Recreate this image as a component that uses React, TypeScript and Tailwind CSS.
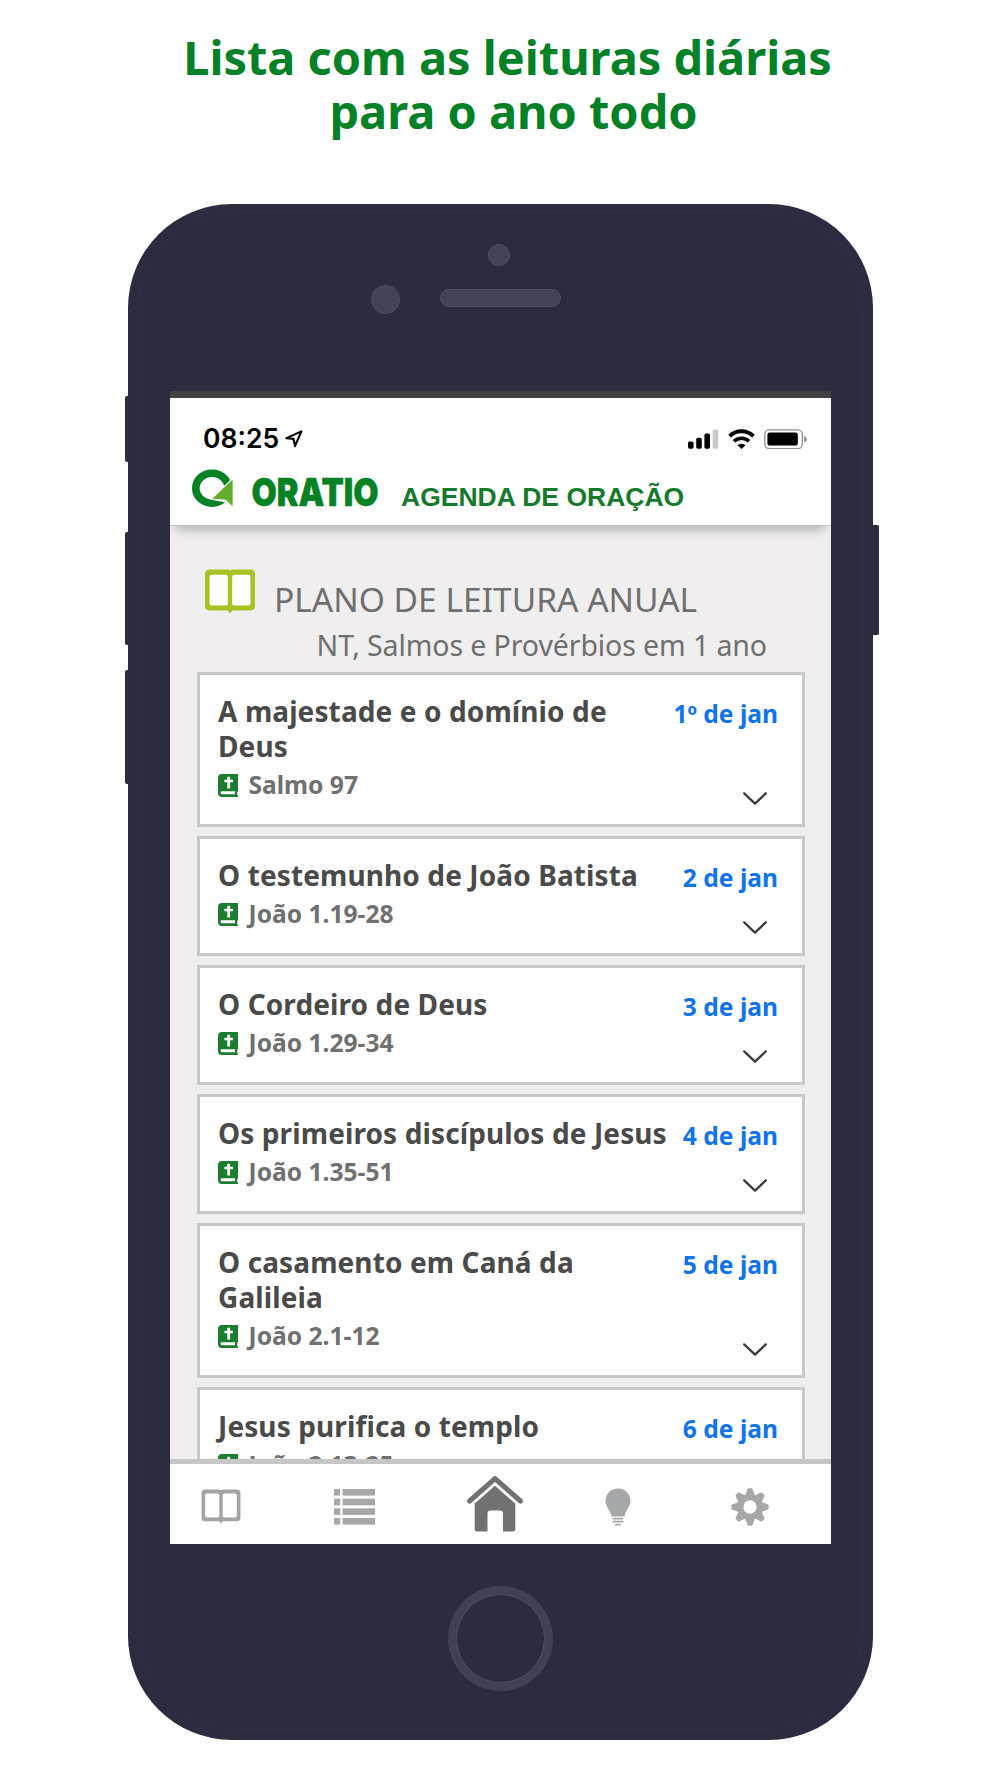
// src/App.tsx
//
// Store preview page: a headline above a phone that shows the yearly reading plan.

import React from 'react';

interface Reading {
  title: string;
  passage: string;
  date: string;
}

const readings: Reading[] = [
  { title: 'A majestade e o domínio de Deus', passage: 'Salmo 97', date: '1º de jan' },
  { title: 'O testemunho de João Batista', passage: 'João 1.19-28', date: '2 de jan' },
  { title: 'O Cordeiro de Deus', passage: 'João 1.29-34', date: '3 de jan' },
  { title: 'Os primeiros discípulos de Jesus', passage: 'João 1.35-51', date: '4 de jan' },
  { title: 'O casamento em Caná da Galileia', passage: 'João 2.1-12', date: '5 de jan' },
  { title: 'Jesus purifica o templo', passage: 'João 2.13-25', date: '6 de jan' },
];

const gearTeeth = [0, 45, 90, 135, 180, 225, 270, 315];

function LocationIcon() {
  return (
    <svg className="h-[18px] w-[18px]" viewBox="0 0 18 18" fill="none">
      <path d="M1.3 8.2 16.4 1.4 10 16.2 8.6 8.9Z" stroke="#000" strokeWidth="2.1" strokeLinejoin="round" />
    </svg>
  );
}

function SignalIcon() {
  return (
    <svg className="h-5 w-[31px]" viewBox="0 0 31 20">
      <rect x="0" y="12.4" width="5.6" height="7.3" rx="1.6" />
      <rect x="8.2" y="8.8" width="5.6" height="10.9" rx="1.6" />
      <rect x="16.4" y="4.6" width="5.6" height="15.1" rx="1.6" />
      <rect x="24.7" y="0.6" width="5.6" height="19.1" rx="1.6" fill="#c9c9c9" />
    </svg>
  );
}

function WifiIcon() {
  return (
    <svg className="h-5 w-[27px]" viewBox="0 0 27 20" fill="none">
      <path d="M1.6 7.2a16.8 16.8 0 0 1 23.8 0" stroke="#000" strokeWidth="3.8" />
      <path d="M6 12.3a10.6 10.6 0 0 1 15 0" stroke="#000" strokeWidth="3.6" />
      <path d="M9.5 16.3a5.7 5.7 0 0 1 8 0l-4 3.6Z" fill="#000" />
    </svg>
  );
}

function BatteryIcon() {
  return (
    <svg className="h-5 w-[43px]" viewBox="0 0 43 20">
      <rect x="0.8" y="0.8" width="37.6" height="18.8" rx="4.6" fill="#fff" stroke="#8e8e8e" strokeWidth="1.3" />
      <rect x="3.4" y="3.6" width="30.4" height="13" rx="2.2" />
      <path d="M40.2 7c3.4 1 3.4 5.4 0 6.4Z" fill="#8e8e8e" />
    </svg>
  );
}

function OratioMark() {
  return (
    <svg className="h-[38px] w-[42px]" viewBox="0 0 42 38">
      <ellipse cx="20" cy="19.2" rx="16.2" ry="15" fill="none" stroke="#068124" strokeWidth="7.6" />
      <path d="M42 7.5 17.5 30.6l22.5 4L42 38Z" fill="#fff" />
      <path d="M40.6 10.4 20.4 29.8l13 .6 7.2 6.8Z" fill="#62ad2b" />
    </svg>
  );
}

function BookIcon({ className, frame }: { className: string; frame: string }) {
  return (
    <svg className={className} viewBox="0 0 50 45">
      <path
        d="M4.5.5H22q2 0 3 1.2Q26 .5 28 .5h17.5Q50 .5 50 5v32q0 4.4-4.5 4.4H27.2L25 44.6l-2.2-3.2H4.5Q0 41.4 0 37V5Q0 .5 4.5.5Z"
        fill={frame}
      />
      <rect x="4.6" y="5.8" width="18.2" height="30.8" rx="2.2" fill="#fff" />
      <rect x="27.2" y="5.8" width="18.2" height="30.8" rx="2.2" fill="#fff" />
    </svg>
  );
}

function BibleIcon() {
  return (
    <svg className="h-[23px] w-5" viewBox="0 0 20 23">
      <path d="M4 0h16v17.4h-.8v4.2h.8V23H4q-4 0-4-4V4q0-4 4-4Z" fill="#1b7e2e" />
      <path d="M9.3 2.7h2.8v3h2.9v2.6h-2.9v6.2H9.3V8.3H6.4V5.7h2.9Z" fill="#fff" />
      <path d="M4 17.3h13v2.9H4a1.45 1.45 0 0 1 0-2.9Z" fill="#fff" />
    </svg>
  );
}

function ChevronIcon() {
  return (
    <svg className="h-[14px] w-6" viewBox="0 0 24 14" fill="none">
      <path d="M1.2 1.4 12 11.6 22.8 1.4" stroke="#3a3a3a" strokeWidth="2.3" strokeLinecap="round" strokeLinejoin="round" />
    </svg>
  );
}

function ListIcon() {
  return (
    <svg className="h-9 w-[41px]" viewBox="0 0 41 36" fill="#a5a7a9">
      {[0, 9.7, 19.3, 29].map((y) => (
        <g key={y}>
          <rect x="0" y={y} width="6.2" height="6.6" />
          <rect x="8.6" y={y} width="32.4" height="6.6" />
        </g>
      ))}
    </svg>
  );
}

function HomeIcon() {
  return (
    <svg className="h-14 w-[56px]" viewBox="0 0 56 56" fill="#707173">
      <path d="M2.6 25 28 2.6 53.4 25" fill="none" stroke="#707173" strokeWidth="5" strokeLinecap="round" />
      <path d="M28 9.8 48.3 27.5V53q0 2.5-2.5 2.5H36V37.500q0-3-3-3H23.500q-3 0-3 3v18h-10Q7.700 55.500 7.700 53V27.500Z" />
    </svg>
  );
}

function BulbIcon() {
  return (
    <svg className="h-[38px] w-[26px]" viewBox="0 0 26 38" fill="#a5a7a9">
      <path d="M13 .4c7 0 12.5 5.5 12.5 12.4 0 6.4-4.6 8.3-6 15.8h-13C5.100 21.100.5 19.200.5 12.800.5 5.900 6 .4 13 .4Z" />
      <rect x="7.5" y="29.8" width="11" height="1.7" rx=".8" />
      <rect x="7.5" y="32.7" width="11" height="1.9" rx=".9" />
      <rect x="10" y="35.8" width="6" height="1.8" rx=".9" />
    </svg>
  );
}

function GearIcon() {
  return (
    <svg className="size-[38px]" viewBox="-19 -19 38 38" fill="#a5a7a9">
      <circle r="12.9" />
      {gearTeeth.map((angle) => (
        <path
          key={angle}
          d="M-5-11 -2.7-17.4Q-2.3-18.7-1.2-18.7H1.2Q2.3-18.7 2.7-17.4L5-11Z"
          transform={`rotate(${angle})`}
        />
      ))}
      <circle r="6.7" fill="#fff" />
    </svg>
  );
}

function ReadingCard({ title, passage, date }: Reading) {
  return (
    <article className="flex shrink-0 justify-between border-[3px] border-[#c8c8c8] bg-white pt-[19px] pr-[24px] pb-4 pl-[18px]">
      <div className="w-[455px] shrink-0">
        <h2 className="max-w-[452px] text-[28px] leading-[35px] font-bold tracking-[0.11px] text-[#4a4a4a]">{title}</h2>
        <p className="mt-1 flex h-10 gap-[10.5px] text-[24.6px] leading-[34px] font-bold text-[#707070]">
          <span className="pt-[6px]">
            <BibleIcon />
          </span>
          {passage}
        </p>
      </div>
      <div className="flex flex-col items-end justify-between whitespace-nowrap">
        <span className="pt-[2px] text-[24.6px] leading-[35px] font-bold text-[#0f74ee]">{date}</span>
        <span className="mr-[11.5px] pb-[2px]">
          <ChevronIcon />
        </span>
      </div>
    </article>
  );
}

function StatusBar() {
  return (
    <div className="flex h-[61px] items-center pt-5 pr-[24px] pl-[33px]">
      <span className="font-['Inter',sans-serif] text-[26.5px] leading-none font-[560]">08:25</span>
      <span className="ml-[6px]">
        <LocationIcon />
      </span>
      <div className="ml-auto flex items-center gap-[9px]">
        <SignalIcon />
        <WifiIcon />
        <BatteryIcon />
      </div>
    </div>
  );
}

function AppHeader() {
  return (
    <header className="relative z-10 h-[128px] shrink-0 border-b border-[#c4c4c4] bg-white shadow-[0_10px_10px_-6px_rgba(0,0,0,0.25)]">
      <StatusBar />
      <div className="flex h-12 items-end pl-[22px]">
        <OratioMark />
        <svg className="ml-[18px] h-12 w-[126px] overflow-visible" viewBox="0 0 126 48">
          <text
            x="-0.5"
            y="47.4"
            textLength="127"
            lengthAdjust="spacingAndGlyphs"
            className="fill-[#068124] font-['Inter',sans-serif] text-[39px] font-black"
            stroke="#068124"
            strokeWidth="0.5"
          >
            ORATIO
          </text>
        </svg>
        <span className="ml-[23px] h-[23px] font-['Liberation_Sans',sans-serif] text-[26.5px] leading-[27px] font-bold whitespace-nowrap text-[#157a2b]">
          AGENDA DE ORAÇÃO
        </span>
      </div>
    </header>
  );
}

function BottomNav() {
  return (
    <nav className="relative z-10 flex h-[85px] shrink-0 items-center border-t-[5px] border-[#c6c6c6] bg-white pt-[5px] pl-[31px]">
      <BookIcon className="h-[35px] w-10" frame="#a1a3a4" />
      <span className="ml-[93px]">
        <ListIcon />
      </span>
      <span className="ml-[92px] pb-[5px]">
        <HomeIcon />
      </span>
      <span className="ml-[82px]">
        <BulbIcon />
      </span>
      <span className="ml-[100px]">
        <GearIcon />
      </span>
    </nav>
  );
}

function Screen() {
  return (
    <div className="mx-[31px] mt-[77px] flex h-[1153px] flex-col overflow-hidden border-t-[7px] border-[#414143] bg-white">
      <AppHeader />
      <main className="flex h-[933px] shrink-0 flex-col overflow-hidden bg-[#f0eeef] pr-[26px] pl-[27px]">
        <div className="flex h-[146px] shrink-0 flex-col pt-[43px]">
          <div className="flex h-[57px] pl-2">
            <BookIcon className="h-[45px] w-[50px]" frame="#a6c323" />
            <h1 className="ml-[19px] pt-[7px] text-[33.5px] leading-[46px] tracking-[0.01px] whitespace-nowrap text-[#6f6f6f]">
              PLANO DE LEITURA ANUAL
            </h1>
          </div>
          <p className="pr-[38px] text-right text-[28.5px] leading-[39px] tracking-[-0.1px] text-[#6f6f6f]">
            NT, Salmos e Provérbios em 1 ano
          </p>
        </div>
        <div className="flex flex-col gap-[9px]">
          {readings.map((reading) => (
            <ReadingCard key={reading.date} {...reading} />
          ))}
        </div>
      </main>
      <BottomNav />
    </div>
  );
}

export default function App() {
  return (
    <div className="h-[1778px] w-[1000px] overflow-hidden bg-white font-['Noto_Sans',sans-serif]">
      <h1 className="h-[204px] pt-[30px] text-center text-[46.9px] leading-[54px] font-bold text-[#038127]">
        <span className="block pl-[15px]">Lista com as leituras diárias</span>
        <span className="block pl-[27px]">para o ano todo</span>
      </h1>

      <div className="flex pl-[125px]">
        {/* Mute and volume keys */}
        <div className="flex w-[3px] flex-col pt-[192px]">
          <div className="h-[66px] rounded-l-[2px] bg-[#2c2c40]" />
          <div className="mt-[70px] h-[113px] rounded-l-[2px] bg-[#2c2c40]" />
          <div className="mt-[25px] h-[114px] rounded-l-[2px] bg-[#2c2c40]" />
        </div>

        <div className="h-[1536px] w-[745px] rounded-[104px] bg-[#2c2c40] px-[10px] pt-2 pb-[10px]">
          <div className="h-full rounded-[98px] border border-[#313146]">
            <div className="mt-[31px] ml-[348.5px] size-[22px] rounded-full border border-[#504f60] bg-[#434257]" />
            <div className="mt-[19px] ml-[231.5px] flex gap-10">
              <div className="size-[29px] rounded-full border border-[#504f60] bg-[#434257]" />
              <div className="mt-1 h-[18px] w-[121px] rounded-full border border-[#504f60] bg-[#434257]" />
            </div>
            <Screen />
            <div className="mt-[42px] ml-[309px] flex size-[105px] rounded-full bg-[#414055] p-2">
              <div className="size-full rounded-full border border-[#504f60] bg-[#2c2c40]" />
            </div>
          </div>
        </div>

        {/* Power key */}
        <div className="mt-[321px] h-[110px] w-[6px] rounded-r-[2px] bg-[#2c2c40]" />
      </div>
    </div>
  );
}
